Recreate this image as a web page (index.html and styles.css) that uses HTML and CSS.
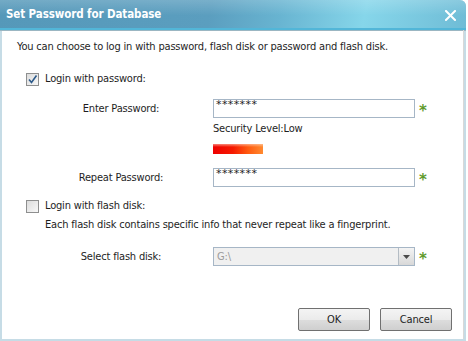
FILE: index.html
```html
<!DOCTYPE html>
<html>
<head>
<meta charset="utf-8">
<link rel="stylesheet" href="styles.css">
</head>
<body>
<div class="window">
  <div class="titlebar">
    <span class="title">Set Password for Database</span>
    <span class="close">
      <svg width="11" height="11" viewBox="0 0 11 11"><path d="M1 1L10 10M10 1L1 10" stroke="#fff" stroke-width="2" stroke-linecap="square"/></svg>
    </span>
  </div>
  <div class="content">
    <p class="intro">You can choose to log in with password, flash disk or password and flash disk.</p>
    <div class="check-row r1">
      <span class="checkbox">
        <svg width="11" height="11" viewBox="0 0 11 11"><path d="M2 5.5L4.5 8.5L9.5 1.5" fill="none" stroke="#2c5a8a" stroke-width="1.6"/></svg>
      </span>
      <span>Login with password:</span>
    </div>
    <div class="field-row r2">
      <span class="label">Enter Password:</span>
      <span class="input"><span class="stars">*******</span></span>
      <span class="req">*</span>
    </div>
    <div class="level">Security Level:Low</div>
    <div class="bar"></div>
    <div class="field-row r3">
      <span class="label">Repeat Password:</span>
      <span class="input"><span class="stars">*******</span></span>
      <span class="req">*</span>
    </div>
    <div class="check-row r4">
      <span class="checkbox"></span>
      <span>Login with flash disk:</span>
    </div>
    <div class="note">Each flash disk contains specific info that never repeat like a fingerprint.</div>
    <div class="field-row r5">
      <span class="label">Select flash disk:</span>
      <span class="combo"><span class="combo-text">G:\</span><span class="drop"><svg width="7" height="4" viewBox="0 0 7 4"><path d="M0 0H7L3.5 4Z" fill="#4a4a4a"/></svg></span></span>
      <span class="req">*</span>
    </div>
    <div class="buttons">
      <button class="btn">OK</button>
      <button class="btn">Cancel</button>
    </div>
  </div>
</div>
</body>
</html>
```
FILE: styles.css
```css
html, body {
  margin: 0;
  padding: 0;
  background: #ffffff;
}
body {
  width: 468px;
  height: 341px;
  overflow: hidden;
  font-family: "DejaVu Sans Condensed", "DejaVu Sans", sans-serif;
  font-size: 11px;
  letter-spacing: -0.18px;
  color: #1e1e1e;
}
.window {
  width: 466px;
  height: 341px;
  box-sizing: border-box;
  border: 2px solid #c6dce6;
  border-top: none;
  border-radius: 0 6px 0 0;
  display: flex;
  flex-direction: column;
  background: #fff;
}
.titlebar {
  height: 28px;
  margin: 0 -2px;
  flex: none;
  display: flex;
  align-items: center;
  justify-content: space-between;
  padding: 0 10px 0 6px;
  border-radius: 0 6px 0 0;
  background:
    linear-gradient(to bottom, rgba(255,255,255,0.18) 0%, rgba(255,255,255,0) 55%),
    linear-gradient(100deg, #5598b9 0%, #5b9ebf 45%, #68b4d1 60%, #86d6ea 78%, #6fbcd6 100%);
  border-bottom: 2px solid #52b6d8;
  box-shadow: 0 1px 0 #9bb6c2;
}
.title {
  color: #fff;
  font-family: "DejaVu Sans Condensed", "DejaVu Sans", sans-serif;
  font-weight: bold;
  font-size: 11.5px;
  letter-spacing: -0.1px;
}
.close {
  display: flex;
  margin-top: 2px;
}
.content {
  flex: 1;
  display: flex;
  flex-direction: column;
  padding: 0 0 0 13px;
  border-right: 1px solid #d8d8d8;
}
.intro {
  margin: 10px 0 0 2px;
  line-height: 14px;
}
.check-row {
  display: flex;
  align-items: center;
  gap: 6px;
  margin-left: 11px;
  height: 14px;
  line-height: 14px;
}
.r1 { margin-top: 18px; }
.r4 { margin-top: 12px; }
.checkbox {
  width: 11px;
  height: 11px;
  border: 1px solid #8e8f8f;
  background: linear-gradient(135deg, #dcdcdc, #f8f8f8);
  display: flex;
  align-items: center;
  justify-content: center;
}
.field-row {
  display: flex;
  align-items: center;
  height: 19px;
}
.r2 { margin-top: 13px; }
.r3 { margin-top: 14px; }
.r5 { margin-top: 15px; }
.label {
  width: 198px;
  box-sizing: border-box;
  padding-left: 14px;
  text-align: center;
  white-space: nowrap;
}
.input {
  width: 202px;
  height: 19px;
  box-sizing: border-box;
  border: 1px solid #a6b6c6;
  background: #fff;
  padding: 0 0 0 2px;
  display: flex;
  align-items: flex-start;
}
.stars {
  font-family: "DejaVu Sans", sans-serif;
  font-size: 11px;
  line-height: 10px;
  letter-spacing: 0.4px;
  color: #222;
}
.req {
  color: #5f9a2c;
  font-weight: bold;
  font-size: 15px;
  line-height: 12px;
  margin-left: 4px;
  height: 8px;
  font-family: "DejaVu Sans", sans-serif;
}
.level {
  margin: 4px 0 0 198px;
  line-height: 14px;
}
.bar {
  margin: 8px 0 0 198px;
  width: 50px;
  height: 10px;
  background:
    linear-gradient(to bottom, rgba(255,220,200,0.6) 0, rgba(255,255,255,0) 3px),
    linear-gradient(to right, #ee0000 0%, #f51a00 40%, #ff5a10 70%, #ff8a30 100%);
}
.note {
  margin: 5px 0 0 30px;
  line-height: 14px;
}
.combo {
  width: 202px;
  height: 19px;
  box-sizing: border-box;
  border: 1px solid #a6b6c6;
  background: #f0f0f0;
  display: flex;
  align-items: center;
  justify-content: space-between;
}
.combo-text {
  color: #9b9b9b;
  padding-left: 3px;
}
.drop {
  width: 16px;
  height: 17px;
  box-sizing: border-box;
  border-left: 1px solid #b4bcc4;
  background: linear-gradient(to bottom, #f4f4f4, #d8d8d8);
  display: flex;
  align-items: center;
  justify-content: center;
}
.buttons {
  display: flex;
  justify-content: flex-end;
  gap: 10px;
  margin-top: 42px;
  padding-right: 11px;
}
.btn {
  width: 72px;
  height: 23px;
  border: 1px solid #707070;
  border-radius: 2px;
  background: linear-gradient(to bottom, #f4f4f4 0%, #ebebeb 50%, #dddddd 51%, #cfcfcf 100%);
  font-family: "DejaVu Sans Condensed", "DejaVu Sans", sans-serif;
  font-size: 11px;
  letter-spacing: -0.18px;
  color: #1e1e1e;
  padding: 0;
}
```
